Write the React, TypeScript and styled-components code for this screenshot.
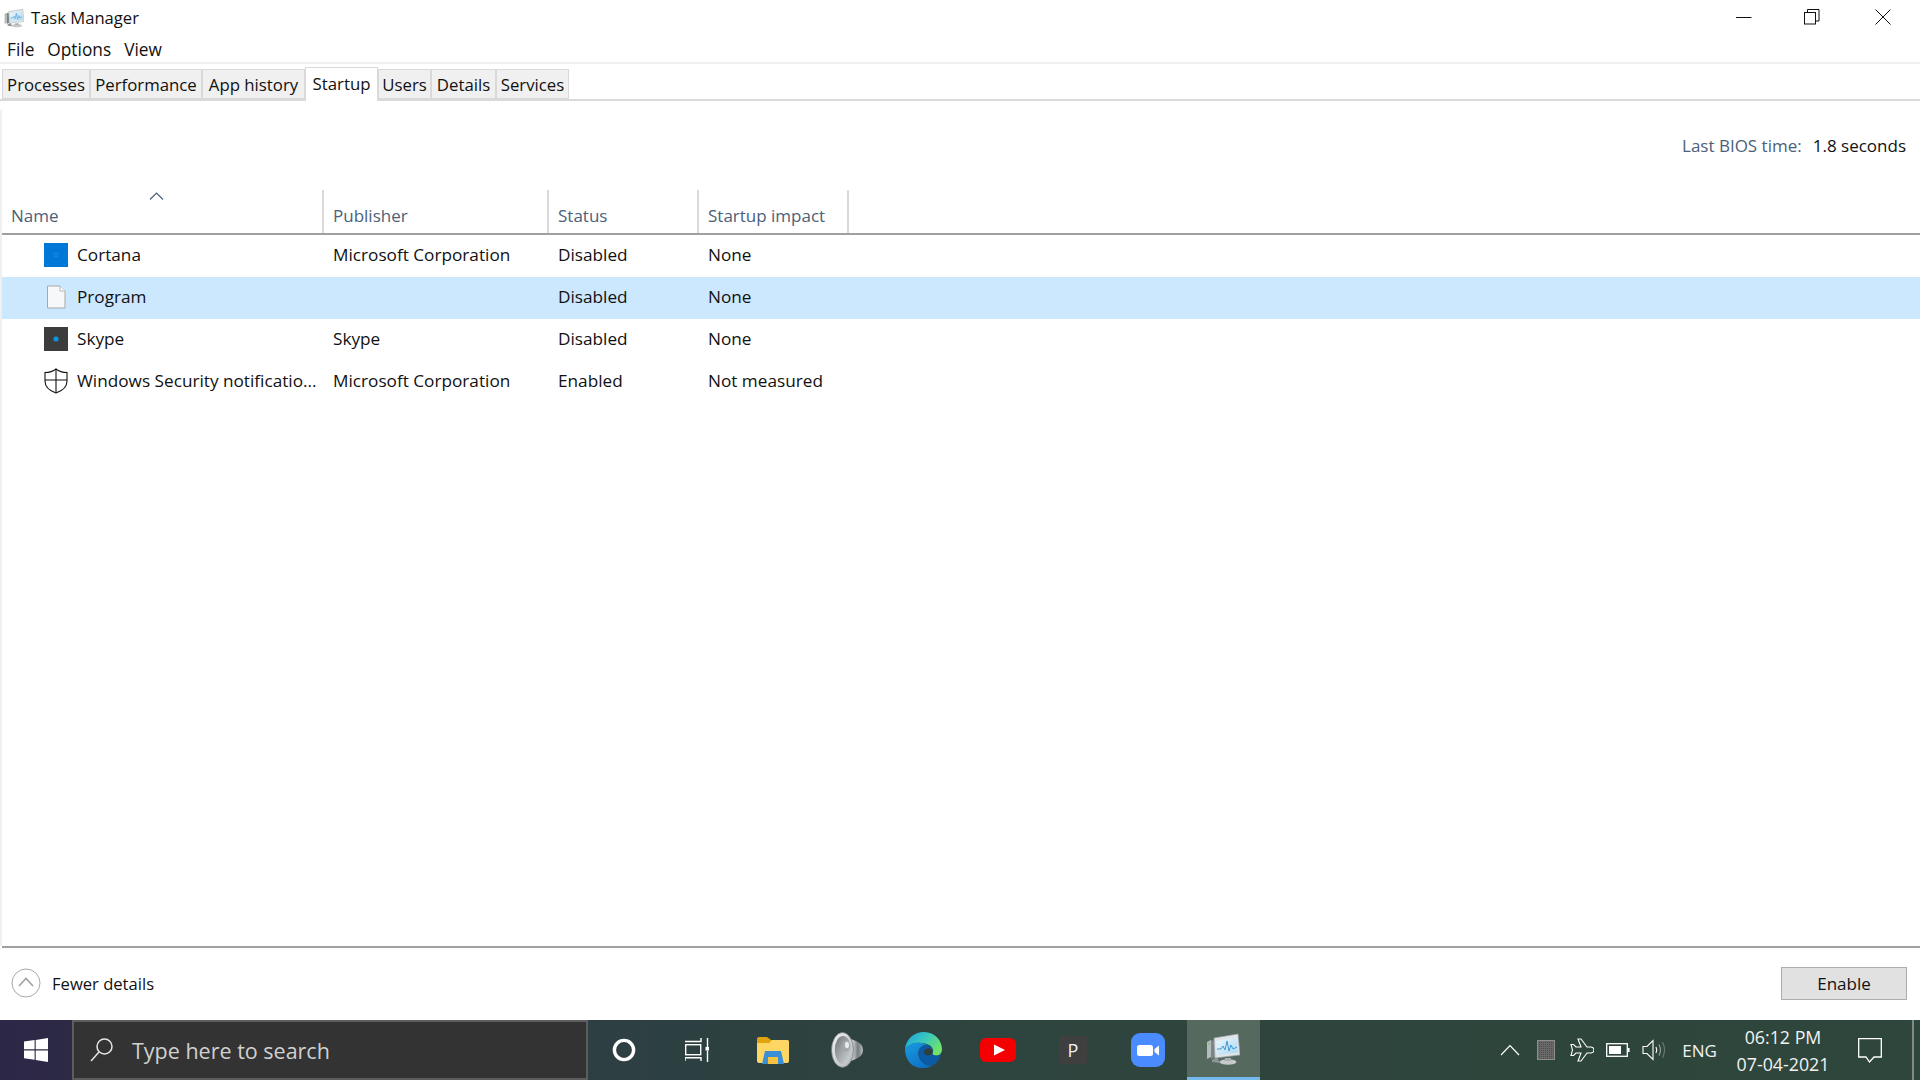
import styled, { createGlobalStyle } from 'styled-components';

const GlobalStyle = createGlobalStyle`
  html, body {
    margin: 0;
    padding: 0;
    background: #fff;
  }
  body {
    font-family: 'Open Sans', 'Noto Sans', sans-serif;
    color: #000;
    overflow: hidden;
  }
`;

const TABS = [
  { label: 'Processes', width: 88 },
  { label: 'Performance', width: 112 },
  { label: 'App history', width: 103 },
  { label: 'Startup', width: 73, active: true },
  { label: 'Users', width: 53 },
  { label: 'Details', width: 65 },
  { label: 'Services', width: 73 },
];

const COLUMNS = ['Name', 'Publisher', 'Status', 'Startup impact'];

const ROWS = [
  { kind: 'cortana', name: 'Cortana', publisher: 'Microsoft Corporation', status: 'Disabled', impact: 'None' },
  { kind: 'file', name: 'Program', publisher: '', status: 'Disabled', impact: 'None', selected: true },
  { kind: 'skype', name: 'Skype', publisher: 'Skype', status: 'Disabled', impact: 'None' },
  { kind: 'shield', name: 'Windows Security notificatio...', publisher: 'Microsoft Corporation', status: 'Enabled', impact: 'Not measured' },
];

const TaskManagerIcon = ({ size }: { size: number }) => (
  <svg width={size} height={size} viewBox="0 0 34 32">
    <defs>
      <linearGradient id="tmScreen" x1="0" y1="0" x2="1" y2="1">
        <stop offset="0" stopColor="#eef8fd" />
        <stop offset="1" stopColor="#a9d8f2" />
      </linearGradient>
    </defs>
    <path d="M11 24 l-5 3 v2 l8 1 z" fill="#8d9499" />
    <path d="M1 9 l4 -2 v17 l-4 2 z" fill="#b5babd" />
    <path d="M5 7 l4 1 v16 l-4 2 z" fill="#7d8487" />
    <circle cx="3.2" cy="11" r="1" fill="#6fcf5a" />
    <path d="M8 5 L32 1 L34 22 L9 25 z" fill="#dfe5e8" stroke="#9aa2a6" strokeWidth="0.7" />
    <path d="M10 8 L30.5 4.5 L32 19.5 L11 22 z" fill="url(#tmScreen)" />
    <path d="M11 16 l4 0 l2 -3 l2 4 l2 -9 l2 10 l2 -6 l2 4 l4 -2" fill="none" stroke="#2f8fd0" strokeWidth="0.9" />
    <ellipse cx="22" cy="29" rx="8.5" ry="2.8" fill="#c4c9cb" />
    <path d="M19 25 h6 v3 h-6 z" fill="#a9afb2" />
  </svg>
);

const WindowIcon = ({ type }: { type: 'min' | 'restore' | 'close' }) => (
  <svg width="16" height="16" viewBox="0 0 16 16" fill="none" stroke="#111" strokeWidth="1">
    {type === 'min' && <path d="M0 8.5 H15.5" />}
    {type === 'restore' && (
      <>
        <rect x="0.5" y="3.5" width="11" height="11.5" />
        <path d="M3.5 3.5 V0.5 H15 V12 H11.5" />
      </>
    )}
    {type === 'close' && <path d="M0.5 0.5 L15.5 15.5 M15.5 0.5 L0.5 15.5" />}
  </svg>
);

const RowIcon = ({ kind }: { kind: string }) => {
  if (kind === 'cortana') {
    return (
      <svg width="24" height="24" viewBox="0 0 24 24">
        <rect width="24" height="24" fill="#0078d7" />
        <circle cx="12" cy="12" r="2" fill="none" stroke="#1a8fe8" strokeWidth="1" />
      </svg>
    );
  }
  if (kind === 'skype') {
    return (
      <svg width="24" height="24" viewBox="0 0 24 24">
        <rect width="24" height="24" fill="#3c3c3c" />
        <rect x="9.5" y="9.5" width="5" height="5" rx="2" fill="#0a94e0" />
      </svg>
    );
  }
  if (kind === 'file') {
    return (
      <svg width="24" height="24" viewBox="0 0 24 24">
        <path d="M3.5 1 H16 L21 6 V23 H3.5 Z" fill="#f7f8fa" stroke="#a8a8a8" strokeWidth="1" />
        <path d="M16 1 V6 H21" fill="#fff" stroke="#b5b5b5" strokeWidth="1" />
      </svg>
    );
  }
  return (
    <svg width="24" height="26" viewBox="0 0 24 26" fill="none" stroke="#111" strokeWidth="1.1">
      <path d="M12 1 C9 3.5 5 4.5 1 4.5 V13 C1 19 6 23 12 25 C18 23 23 19 23 13 V4.5 C19 4.5 15 3.5 12 1 Z" />
      <path d="M12 1 V25 M1 12 H23" />
    </svg>
  );
};

const WindowsLogo = () => (
  <svg width="24" height="24" viewBox="0 0 24 24" fill="#fff">
    <path d="M0 3.6 L10.6 2.1 V11.3 H0 Z M11.7 1.9 L24 0 V11.3 H11.7 Z M0 12.5 H10.6 V21.8 L0 20.3 Z M11.7 12.5 H24 V24 L11.7 22 Z" />
  </svg>
);

const SearchIcon = () => (
  <svg width="24" height="24" viewBox="0 0 24 24" fill="none" stroke="#e6e6e6" strokeWidth="1.5">
    <circle cx="14.5" cy="8.5" r="7.5" />
    <path d="M9 14 L1 23" />
  </svg>
);

const CortanaIcon = () => (
  <svg width="24" height="24" viewBox="0 0 24 24" fill="none">
    <circle cx="12" cy="12" r="9.6" stroke="#fff" strokeWidth="3.4" />
  </svg>
);

const TaskViewIcon = () => (
  <svg width="24" height="26" viewBox="0 0 24 26" fill="none" stroke="#fff" strokeWidth="1.4">
    <path d="M0 4.5 H16 V1" />
    <rect x="0.7" y="7.7" width="15" height="10" />
    <path d="M0 24 V20.7 H16 V24" />
    <path d="M22.5 1 V10 M22.5 14 V25" />
    <rect x="20.5" y="10" width="4" height="3.6" fill="#fff" stroke="none" />
  </svg>
);

const FolderIcon = () => (
  <svg width="32" height="27" viewBox="0 0 32 27">
    <path d="M0 2 Q0 0 2 0 H10 L14 3 H30 Q32 3 32 5 V8 H0 Z" fill="#e0a30f" />
    <path d="M0 6 H12 L15 3 H30 Q32 3 32 5 V24 Q32 26 30 26 H2 Q0 26 0 24 Z" fill="#fdd664" />
    <path d="M5 27 L8 14 H24 L27 27 H21 L19.5 20 H12.5 L11 27 Z" fill="#3a8fd6" />
    <rect x="11" y="20" width="10" height="7" fill="#f5c242" />
  </svg>
);

const SpeakerAppIcon = () => (
  <svg width="32" height="36" viewBox="0 0 32 36">
    <defs>
      <linearGradient id="ring" x1="0" y1="0" x2="1" y2="1">
        <stop offset="0" stopColor="#f4f5f6" />
        <stop offset="1" stopColor="#aeb2b6" />
      </linearGradient>
      <linearGradient id="cone" x1="0" y1="0" x2="1" y2="1">
        <stop offset="0" stopColor="#6e7479" />
        <stop offset="1" stopColor="#d8dbdd" />
      </linearGradient>
      <linearGradient id="ribs" x1="0" y1="0" x2="1" y2="0">
        <stop offset="0" stopColor="#6c7176" />
        <stop offset="0.4" stopColor="#c8ccce" />
        <stop offset="0.7" stopColor="#767b80" />
        <stop offset="1" stopColor="#b8bcbf" />
      </linearGradient>
    </defs>
    <path d="M15 5 L25 9 Q32 12 32 18 Q32 24 25 27 L15 31 Z" fill="url(#ribs)" />
    <ellipse cx="11.5" cy="18" rx="11" ry="17.5" fill="url(#ring)" stroke="#6f7479" strokeWidth="0.7" />
    <ellipse cx="12" cy="18" rx="8.2" ry="14" fill="url(#cone)" />
    <ellipse cx="15" cy="14" rx="3.8" ry="5.5" fill="#a3a7ab" />
    <ellipse cx="16" cy="13" rx="2" ry="3.2" fill="#e8eaeb" />
  </svg>
);

const EdgeIcon = () => (
  <svg width="37" height="36" viewBox="0 0 37 36">
    <defs>
      <linearGradient id="edgeTop" x1="0" y1="0" x2="1" y2="0.6">
        <stop offset="0" stopColor="#1b9de2" />
        <stop offset="0.5" stopColor="#38c6c0" />
        <stop offset="1" stopColor="#6fe36a" />
      </linearGradient>
      <linearGradient id="edgeLow" x1="0" y1="0" x2="0.7" y2="1">
        <stop offset="0" stopColor="#1a9be0" />
        <stop offset="1" stopColor="#0c6fc4" />
      </linearGradient>
    </defs>
    <path d="M0 17 C1 7 9 0 19 0 C30 0 37 9 37 17 C37 24 31 25 27 22 C29 19 28 15 24 13 C16 9 6 10 0 17 Z" fill="url(#edgeTop)" />
    <path d="M0 17 C5 10 17 9 22 13 C15 13 12 19 14 25 C16 31 23 35 28 33 C24 36 20 36 17 36 C7 36 0 28 0 17 Z" fill="url(#edgeLow)" />
    <path d="M22 13 C27 14 29 18 27 22 C31 25 35 24 36 21 C35 27 32 31 28 33 C23 35 16 31 14 25 C12 19 15 13 22 13 Z" fill="#0c59a4" />
    <path d="M27 22 C23 25 18 23 19 19 C20 16 25 15 27 18 C28 19 28 21 27 22 Z" fill="#2e4040" />
  </svg>
);

const YoutubeIcon = () => (
  <svg width="36" height="24" viewBox="0 0 36 24">
    <rect width="36" height="24" rx="6" fill="#f40000" />
    <path d="M14 6.5 L25 12 L14 17.5 Z" fill="#fff" />
  </svg>
);

const ZoomIcon = () => (
  <svg width="34" height="34" viewBox="0 0 34 34">
    <rect width="34" height="34" rx="9" fill="#4a8cff" />
    <rect x="6" y="12" width="16" height="11" rx="2.5" fill="#fff" />
    <path d="M23.5 16 L28 12.5 V22.5 L23.5 19 Z" fill="#fff" />
  </svg>
);

const TrayIcon = ({ kind }: { kind: string }) => {
  if (kind === 'chevron') {
    return (
      <svg width="20" height="12" viewBox="0 0 20 12" fill="none" stroke="#fff" strokeWidth="1.2">
        <path d="M1 11 L10 1.5 L19 11" />
      </svg>
    );
  }
  if (kind === 'grid') {
    return (
      <svg width="18" height="20" viewBox="0 0 18 20">
        <defs>
          <pattern id="mesh" width="2" height="2" patternUnits="userSpaceOnUse">
            <rect width="2" height="2" fill="#6a6a6a" />
            <rect width="1" height="1" fill="#4c4c4c" />
          </pattern>
        </defs>
        <rect width="18" height="20" fill="url(#mesh)" />
        <rect x="0.5" y="0.5" width="17" height="19" fill="none" stroke="#8f8f8f" />
      </svg>
    );
  }
  if (kind === 'plane') {
    return (
      <svg width="24" height="24" viewBox="0 0 24 24" fill="none" stroke="#fff" strokeWidth="1.1">
        <path d="M8 1 H11 L17 9 H21 Q24 9.5 24 12 Q24 14.5 21 15 H17 L11 23 H8 L11 15 H6 L3.5 17.5 H1 L2.5 12 L1 6.5 H3.5 L6 9 H11 Z" />
      </svg>
    );
  }
  if (kind === 'battery') {
    return (
      <svg width="24" height="14" viewBox="0 0 24 14">
        <rect x="0.7" y="0.7" width="20.6" height="12.6" fill="none" stroke="#fff" strokeWidth="1.3" />
        <rect x="3" y="3" width="12" height="8" fill="#fff" />
        <rect x="22" y="5" width="1.6" height="4" fill="#fff" />
      </svg>
    );
  }
  return (
    <svg width="24" height="22" viewBox="0 0 24 22" fill="none" stroke="#fff" strokeWidth="1.1">
      <path d="M1 7.5 H5 L11 1.5 V20.5 L5 14.5 H1 Z" />
      <path d="M14 8 Q15.5 11 14 14" />
      <path d="M17 5.5 Q20 11 17 16.5" stroke="#a0a8a4" />
      <path d="M20.5 3 Q24.5 11 20.5 19" stroke="#6f7c76" />
    </svg>
  );
};

const ActionCenterIcon = () => (
  <svg width="24" height="25" viewBox="0 0 24 25" fill="none" stroke="#fff" strokeWidth="1.3">
    <path d="M0.7 0.7 H23.3 V19 H16 L11.5 24 L8 19 H0.7 Z" />
  </svg>
);

const App = () => {
  return (
    <Page>
      <GlobalStyle />
      <TitleBar>
        <TitleIcon>
          <TaskManagerIcon size={20} />
        </TitleIcon>
        <TitleText>Task Manager</TitleText>
        <WindowButtons>
          <WindowButton $right={52}>
            <WindowIcon type="min" />
          </WindowButton>
          <WindowButton $right={55}>
            <WindowIcon type="restore" />
          </WindowButton>
          <WindowButton $right={29}>
            <WindowIcon type="close" />
          </WindowButton>
        </WindowButtons>
      </TitleBar>
      <MenuBar>
        <MenuItem>File</MenuItem>
        <MenuItem>Options</MenuItem>
        <MenuItem>View</MenuItem>
      </MenuBar>
      <TabStrip>
        {TABS.map(tab => (
          <Tab key={tab.label} $active={tab.active} $width={tab.width}>
            {tab.label}
          </Tab>
        ))}
      </TabStrip>
      <Content>
        <BiosLine>
          <BiosLabel>Last BIOS time:</BiosLabel>
          <BiosValue>1.8 seconds</BiosValue>
        </BiosLine>
        <TableHeader>
          {COLUMNS.map(col => (
            <HeaderCell key={col}>{col}</HeaderCell>
          ))}
          <SortCaret width="15" height="8" viewBox="0 0 15 8" fill="none" stroke="#4c607a" strokeWidth="1.2">
            <path d="M1 7.5 L7.5 1 L14 7.5" />
          </SortCaret>
        </TableHeader>
        {ROWS.map(row => (
          <Row key={row.name} $selected={row.selected}>
            <NameCell>
              <IconBox>
                <RowIcon kind={row.kind} />
              </IconBox>
              {row.name}
            </NameCell>
            <Cell>{row.publisher}</Cell>
            <Cell>{row.status}</Cell>
            <Cell>{row.impact}</Cell>
          </Row>
        ))}
      </Content>
      <Footer>
        <FewerDetails>
          <FewerIcon width="30" height="30" viewBox="0 0 30 30" fill="none">
            <circle cx="15" cy="15" r="14" stroke="#a8a8a8" strokeWidth="1" />
            <path d="M8 18 L15 10.5 L22 18" stroke="#a0a0a0" strokeWidth="1.6" />
          </FewerIcon>
          Fewer details
        </FewerDetails>
        <EnableButton>Enable</EnableButton>
      </Footer>
      <Taskbar>
        <StartButton>
          <WindowsLogo />
        </StartButton>
        <SearchBox>
          <SearchIcon />
          <SearchText>Type here to search</SearchText>
        </SearchBox>
        <AppSlot $pad={3}>
          <CortanaIcon />
        </AppSlot>
        <AppSlot $pad={8}>
          <TaskViewIcon />
        </AppSlot>
        <AppSlot $pad={5}>
          <FolderIcon />
        </AppSlot>
        <AppSlot $pad={8}>
          <SpeakerAppIcon />
        </AppSlot>
        <AppSlot $pad={5}>
          <EdgeIcon />
        </AppSlot>
        <AppSlot $pad={5}>
          <YoutubeIcon />
        </AppSlot>
        <AppSlot $pad={5}>
          <PowerIcon>P</PowerIcon>
        </AppSlot>
        <AppSlot $pad={5}>
          <ZoomIcon />
        </AppSlot>
        <ActiveSlot>
          <TaskManagerIcon size={34} />
        </ActiveSlot>
        <Tray>
          <TraySlot>
            <TrayIcon kind="chevron" />
          </TraySlot>
          <TraySlot>
            <TrayIcon kind="grid" />
          </TraySlot>
          <TraySlot>
            <TrayIcon kind="plane" />
          </TraySlot>
          <TraySlot>
            <TrayIcon kind="battery" />
          </TraySlot>
          <TraySlot>
            <TrayIcon kind="volume" />
          </TraySlot>
          <LangText>ENG</LangText>
          <Clock>
            <span>06:12 PM</span>
            <span>07-04-2021</span>
          </Clock>
          <ActionSlot>
            <ActionCenterIcon />
          </ActionSlot>
          <ShowDesktop />
        </Tray>
      </Taskbar>
    </Page>
  );
};

const Page = styled.div`
  display: flex;
  flex-direction: column;
  width: 1920px;
  height: 1080px;
  font-size: 17.2px;
  overflow: hidden;
`;

const TitleBar = styled.div`
  display: flex;
  align-items: center;
  height: 36px;
  flex-shrink: 0;
`;

const TitleIcon = styled.div`
  display: flex;
  margin-left: 4px;
  margin-right: 7px;
`;

const TitleText = styled.div`
  font-size: 16.6px;
  padding-bottom: 2px;
  color: #111;
`;

const WindowButtons = styled.div`
  display: flex;
  align-items: center;
  margin-left: auto;
  padding-bottom: 3px;
`;

const WindowButton = styled.div<{ $right: number }>`
  display: flex;
  margin-right: ${p => p.$right}px;
`;

const MenuBar = styled.div`
  display: flex;
  gap: 13px;
  align-items: center;
  height: 26px;
  padding-left: 7px;
  border-bottom: 2px solid #f0f0f0;
  flex-shrink: 0;
`;

const MenuItem = styled.div`
  font-size: 17.3px;
  color: #111;
`;

const TabStrip = styled.div`
  display: flex;
  align-items: flex-end;
  height: 37px;
  padding-left: 2px;
  border-bottom: 2px solid #d9d9d9;
  flex-shrink: 0;
  box-sizing: border-box;
`;

const Tab = styled.div<{ $active?: boolean; $width: number }>`
  display: flex;
  justify-content: center;
  align-items: center;
  box-sizing: border-box;
  width: ${p => p.$width}px;
  height: ${p => (p.$active ? 34 : 30)}px;
  margin-bottom: ${p => (p.$active ? -2 : 0)}px;
  padding-bottom: ${p => (p.$active ? 3 : 0)}px;
  background: ${p => (p.$active ? '#fff' : '#f0f0f0')};
  border: 1px solid #d9d9d9;
  border-bottom: ${p => (p.$active ? 'none' : '1px solid #d9d9d9')};
  font-size: 16.8px;
  color: #111;
  white-space: nowrap;
`;

const Content = styled.div`
  flex: 1;
  margin-top: 9px;
  border-left: 2px solid #f0f0f0;
  min-height: 0;
`;

const BiosLine = styled.div`
  display: flex;
  justify-content: flex-end;
  align-items: center;
  gap: 11px;
  height: 80px;
  padding-right: 14px;
  padding-bottom: 10px;
  box-sizing: border-box;
`;

const BiosLabel = styled.span`
  color: #4c607a;
  font-size: 17px;
`;

const BiosValue = styled.span`
  font-size: 17px;
  color: #111;
`;

const TableHeader = styled.div`
  position: relative;
  display: grid;
  grid-template-columns: 322px 225px 150px 150px 1fr;
  height: 45px;
  border-bottom: 2px solid #a0a0a0;
  box-sizing: border-box;
`;

const HeaderCell = styled.div`
  display: flex;
  align-items: flex-end;
  padding: 0 0 6px 9px;
  border-right: 2px solid #d9d9d9;
  color: #4c607a;
  font-size: 17px;
`;

const SortCaret = styled.svg`
  position: absolute;
  left: 147px;
  top: 2px;
`;

const Row = styled.div<{ $selected?: boolean }>`
  display: grid;
  grid-template-columns: 322px 225px 150px 149px 1fr;
  align-items: center;
  box-sizing: border-box;
  height: 42px;
  padding-bottom: 3px;
  background: ${p => (p.$selected ? '#cce8ff' : 'transparent')};
  color: #111;
`;

const NameCell = styled.div`
  display: flex;
  align-items: center;
  gap: 9px;
  padding-left: 42px;
  white-space: nowrap;
`;

const IconBox = styled.div`
  display: flex;
  width: 24px;
  height: 26px;
  align-items: center;
`;

const Cell = styled.div`
  padding-left: 9px;
  white-space: nowrap;
`;

const Footer = styled.div`
  display: flex;
  align-items: center;
  justify-content: space-between;
  height: 74px;
  box-sizing: border-box;
  margin-left: 2px;
  padding: 0 13px 2px 9px;
  border-top: 2px solid #a0a0a0;
  flex-shrink: 0;
`;

const FewerDetails = styled.div`
  display: flex;
  align-items: center;
  gap: 11px;
  font-size: 16.6px;
  color: #111;
`;

const FewerIcon = styled.svg`
  display: block;
`;

const EnableButton = styled.div`
  display: flex;
  align-items: center;
  justify-content: center;
  box-sizing: border-box;
  width: 126px;
  height: 33px;
  background: #e1e1e1;
  border: 1.5px solid #adadad;
  font-size: 17px;
  color: #111;
`;

const Taskbar = styled.div`
  display: flex;
  align-items: stretch;
  height: 60px;
  flex-shrink: 0;
  background: linear-gradient(90deg, #2c2747 0, #2c2a45 72px, #2d3f42 600px, #2e443e 1000px, #2e463b 100%);
`;

const StartButton = styled.div`
  display: flex;
  align-items: center;
  justify-content: center;
  width: 72px;
`;

const SearchBox = styled.div`
  display: flex;
  align-items: center;
  gap: 18px;
  box-sizing: border-box;
  width: 516px;
  padding-left: 16px;
  background: #333;
  border: 2px solid #5d5d5d;
`;

const SearchText = styled.span`
  font-size: 21.5px;
  color: #d0d0d0;
`;

const AppSlot = styled.div<{ $pad: number }>`
  display: flex;
  align-items: center;
  justify-content: center;
  box-sizing: border-box;
  width: 75px;
  padding-right: ${p => p.$pad}px;
`;

const ActiveSlot = styled.div`
  display: flex;
  align-items: center;
  justify-content: center;
  box-sizing: border-box;
  width: 73px;
  margin-left: -1px;
  padding-right: 2px;
  background: #55695f;
  border-bottom: 3px solid #76b9ed;
`;

const PowerIcon = styled.div`
  display: flex;
  align-items: center;
  justify-content: center;
  width: 28px;
  height: 28px;
  background: #3f3f3f;
  border-radius: 2px;
  color: #f2f2f2;
  font-size: 18px;
`;

const Tray = styled.div`
  display: flex;
  align-items: center;
  margin-left: auto;
  height: 100%;
  color: #fff;
`;

const TraySlot = styled.div`
  display: flex;
  align-items: center;
  justify-content: center;
  width: 36px;
`;

const LangText = styled.div`
  width: 55px;
  margin-right: 2px;
  text-align: center;
  font-size: 17px;
  color: #f2f2f2;
`;

const Clock = styled.div`
  display: flex;
  flex-direction: column;
  align-items: center;
  gap: 5px;
  width: 98px;
  margin-left: 5px;
  font-size: 17.8px;
  line-height: 22px;
  color: #f2f2f2;
`;

const ActionSlot = styled.div`
  display: flex;
  align-items: center;
  justify-content: center;
  width: 50px;
  margin-left: 13px;
`;

const ShowDesktop = styled.div`
  width: 2px;
  height: 100%;
  margin-left: 17px;
  margin-right: 6px;
  background: #7e8a85;
`;

export default App;
